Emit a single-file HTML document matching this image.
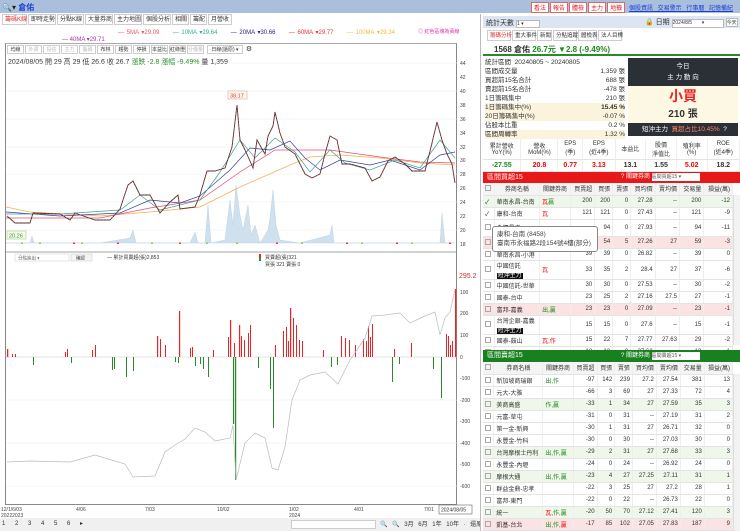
<!DOCTYPE html>
<html><head><meta charset="utf-8">
<style>
*{margin:0;padding:0;box-sizing:border-box}
body{width:740px;height:531px;overflow:hidden;background:#fff;font-family:"Liberation Sans","Noto Sans CJK TC",sans-serif;font-size:7px;color:#333;position:relative}
.a{position:absolute}
.tab{display:inline-block;border:1px solid #ccc;padding:0 2px;margin-right:1px;font-size:6px;background:#fff;height:11px;line-height:10px}
.tt{display:inline-block;border:1px solid #ccc;width:17px;height:9px;line-height:8px;font-size:5px;text-align:center;margin-right:1px;background:#fff}
table{border-collapse:collapse;width:100%}
td{border-bottom:1px solid #e4e4e4;border-right:1px solid #eee;padding:0 2px;height:12px;font-size:6px;text-align:right;white-space:nowrap}
td.l{text-align:left}
.b{font-weight:bold}
.r{color:#e00}.g{color:#1a8a1a}
.cb{display:inline-block;width:6px;height:6px;border:1px solid #aaa;vertical-align:middle}
.blk{background:#111;color:#fff;padding:0 1px}
.pk{background:#fbe3e3}.lg{background:#eef7ea}
</style></head><body>
<div class="a" style="left:0;top:0;width:740px;height:13px;background:#a9bfdc"></div>
<div class="a" style="left:2px;top:2px;font-size:8px;color:#222">🔍▾ <span style="color:#1a3fcf;font-weight:bold">倉佑</span></div>
<div class="a" style="left:531px;top:2px">
<span style="display:inline-block;background:#fff;border:1px solid #d66;color:#d22;padding:0 2px;font-size:6px;margin-right:1px">看法</span><span style="display:inline-block;background:#fff;border:1px solid #d66;color:#d22;padding:0 2px;font-size:6px;margin-right:1px">報告</span><span style="display:inline-block;background:#fff;border:1px solid #d66;color:#d22;padding:0 2px;font-size:6px;margin-right:1px">體檢</span><span style="display:inline-block;background:#fff;border:1px solid #d66;color:#d22;padding:0 2px;font-size:6px;margin-right:1px">主力</span><span style="display:inline-block;background:#fff;border:1px solid #d66;color:#d22;padding:0 2px;font-size:6px">地籤</span></div>
<div class="a" style="left:629px;top:3px;color:#1a3fcf;font-size:6px;text-decoration:underline;word-spacing:3px">個股資訊 交易警示 行事曆 記憶備紀</div>
<div class="a" style="left:2px;top:14px;white-space:nowrap"><span class="tab" style="color:#d33;width:25px">籌碼K線</span><span class="tab" style="width:28px">即時走勢</span><span class="tab" style="width:27px">分點K線</span><span class="tab" style="width:28px">大量券商</span><span class="tab" style="width:28px">主力地圖</span><span class="tab" style="width:28px">個股分析</span><span class="tab" style="width:17px">相關</span><span class="tab" style="width:17px">籌配</span><span class="tab" style="width:24px">月營收</span></div>
<div class="a" style="left:118px;top:29px;font-size:6px;word-spacing:1px;white-space:nowrap"><span style="color:#e55">— 5MA ▾29.09</span> &nbsp;&nbsp;&nbsp; <span style="color:#3a9">— 10MA ▾29.64</span> &nbsp;&nbsp;&nbsp; <span style="color:#228">— 20MA ▾30.66</span> &nbsp;&nbsp;&nbsp; <span style="color:#e33">— 60MA ▾29.77</span> &nbsp;&nbsp;&nbsp; <span style="color:#eb4">— 100MA ▾29.34</span></div>
<div class="a" style="left:418px;top:28px;font-size:5px;color:#d3a">◎ 紅色區塊為黃線</div>
<div class="a" style="left:62px;top:36px;font-size:6px;color:#a3a">— 40MA ▾29.71</div>
<div class="a" style="left:5px;top:43px;width:452px;height:462px;border:1px solid #888;border-top:1px solid #aaa"></div>
<div class="a" style="left:7px;top:45px;white-space:nowrap"><span class="tt">均線</span><span class="tt" style="color:#bbb">外資</span><span class="tt" style="color:#bbb">投信</span><span class="tt" style="color:#bbb">主力</span><span class="tt" style="color:#bbb">籌碼</span><span class="tt">布林</span><span class="tt">趨勢</span><span class="tt">停損</span><span class="tt">本益比</span><span class="tt">紅綠燈</span><span class="tt" style="color:#bbb">分價量</span> <span class="tt" style="width:36px">日線(還原) ▾</span> <span style="font-size:7px">⚙</span></div>
<div class="a" style="left:8px;top:57px;font-size:7px;white-space:nowrap">2024/08/05 開 29 高 29 低 26.6 收 26.7 <span class="g">漲跌 -2.8 漲幅 -9.49%</span> 量 1,359</div>
<svg class="a" style="left:0;top:0" width="480" height="531">
<g stroke="#eee" stroke-width="0.6">
<line x1="6" y1="63" x2="457" y2="63"/><line x1="6" y1="91" x2="457" y2="91"/><line x1="6" y1="119" x2="457" y2="119"/><line x1="6" y1="147" x2="457" y2="147"/><line x1="6" y1="174" x2="457" y2="174"/><line x1="6" y1="202" x2="457" y2="202"/><line x1="6" y1="230" x2="457" y2="230"/>
<line x1="6" y1="400" x2="457" y2="400"/><line x1="6" y1="443" x2="457" y2="443"/><line x1="6" y1="486" x2="457" y2="486"/></g>
<g font-size="5" fill="#444" font-family="Liberation Sans">
<text x="460" y="65">44</text><text x="460" y="79">42</text><text x="460" y="93">40</text><text x="460" y="107">38</text><text x="460" y="121">36</text><text x="460" y="135">34</text><text x="460" y="149">32</text><text x="460" y="162">30</text><text x="460" y="176">28</text><text x="460" y="190">26</text><text x="460" y="204">24</text><text x="460" y="218">22</text><text x="460" y="232">20</text><text x="460" y="246">18</text>
<text x="460" y="294">100</text><text x="460" y="315">200</text><text x="460" y="337">100</text><text x="460" y="359">0</text><text x="460" y="380">-100</text><text x="460" y="402">-200</text><text x="460" y="423">-300</text><text x="460" y="445">-400</text><text x="460" y="466">-500</text><text x="460" y="488">-600</text>
<text x="1" y="511">12/1/6/03</text><text x="1" y="517">20222023</text><text x="76" y="511">4/06</text><text x="145" y="511">7/03</text><text x="217" y="511">10/02</text><text x="289" y="511">1/02</text><text x="289" y="517">2024</text><text x="354" y="511">4/01</text><text x="424" y="511">7/01</text></g>
<rect x="439" y="505" width="33" height="9" fill="#fff" stroke="#666" stroke-width="0.6"/><text x="441" y="511.5" font-size="5" fill="#333">2024/08/05</text>
<text x="459" y="278" font-size="7" fill="#c33">295.2</text>
<path d="M6 243 L30 243 L32 236 L34 243 L100 243 L130 238 L133 230 L136 243 L190 243 L195 232 L198 243 L205 243 L208 205 L211 243 L225 240 L230 200 L233 225 L236 185 L240 215 L243 230 L248 205 L251 235 L255 225 L260 243 L268 230 L270 218 L273 190 L276 225 L280 240 L300 243 L330 235 L332 225 L334 243 L440 243 L442 213 L445 243 L455 243Z" fill="#cfe0ee" stroke="#b6cde0" stroke-width="0.4"/>
<g fill="#8c3" font-size="4"><text x="20" y="244">▲</text><text x="38" y="244">▲</text><text x="80" y="244">▲</text><text x="150" y="244">▲</text><text x="205" y="244">▲</text><text x="235" y="244">▲</text><text x="300" y="244">▲</text><text x="360" y="244">▲</text><text x="410" y="244">▲</text></g>
<g fill="#d33" font-size="4"><text x="72" y="244">▲</text><text x="116" y="244">▲</text><text x="178" y="244">▲</text><text x="275" y="244">▲</text><text x="345" y="244">▲</text><text x="395" y="244">▲</text><text x="448" y="244">▲</text></g>
<polyline fill="none" stroke="#f0b050" stroke-width="0.7" points="6,207 30,212 100,216 150,212 200,207 240,187 290,165 310,157 340,155 380,158 420,163 455,165"/>
<polyline fill="none" stroke="#e05070" stroke-width="0.7" points="6,218 100,218 150,208 200,200 240,172 275,150 300,150 330,150 380,157 420,162 455,163"/>
<polyline fill="none" stroke="#3340a0" stroke-width="0.7" points="6,212 60,216 120,213 150,200 180,203 200,196 230,170 250,148 270,150 290,141 305,158 320,170 340,160 370,165 390,160 420,170 440,155 455,152"/>
<polyline fill="none" stroke="#40a090" stroke-width="0.7" points="6,214 60,214 120,210 140,195 160,210 200,200 220,172 240,140 255,158 275,138 295,152 310,172 330,150 345,163 370,170 395,160 420,168 440,140 455,158"/>
<polyline fill="none" stroke="#333" stroke-width="0.9" points="7,216 15,223 30,223 33,213 60,214 70,220 75,213 95,220 110,220 120,209 128,185 133,181 140,195 150,195 160,213 170,202 178,195 180,209 195,207 200,195 207,171 215,171 225,168 232,147 237,105 240,140 245,150 250,161 253,168 257,140 265,154 268,136 273,126 275,112 280,133 285,147 295,154 305,174 312,178 320,174 325,154 330,136 337,140 342,164 350,164 365,168 372,181 380,177 388,161 395,157 405,164 412,171 425,171 432,143 437,122 442,140 447,154 452,164 455,183"/>
<polyline fill="none" stroke="#e33" stroke-width="0.6" stroke-dasharray="1.5 2" points="7,216 15,223 30,223 33,213 60,214 70,220 75,213 95,220 110,220 120,209 128,185 133,181 140,195 150,195 160,213 170,202 178,195 180,209 195,207 200,195 207,171 215,171 225,168 232,147 237,105 240,140 245,150 250,161 253,168 257,140 265,154 268,136 273,126 275,112 280,133 285,147 295,154 305,174 312,178 320,174 325,154 330,136 337,140 342,164 350,164 365,168 372,181 380,177 388,161 395,157 405,164 412,171 425,171 432,143 437,122 442,140 447,154 452,164 455,183"/>
<rect x="228" y="91" width="19" height="8" fill="#fff8e8" stroke="#dcc"/><text x="230" y="97.5" font-size="5.5" fill="#e33">38.17</text>
<rect x="7" y="231" width="19" height="8" fill="#f3fbe8" stroke="#cdb"/><text x="9" y="237.5" font-size="5.5" fill="#393">20.26</text>
<line x1="6" y1="252" x2="457" y2="252" stroke="#888" stroke-width="0.8"/>
<line x1="6" y1="357" x2="457" y2="357" stroke="#ccc" stroke-width="0.5"/>
<g fill="#e22">
<rect x="7" y="349" width="1.3" height="8"/><rect x="12" y="354" width="1" height="3"/><rect x="15" y="354" width="1" height="3"/><rect x="65" y="352" width="1" height="5"/><rect x="67" y="349" width="1" height="8"/><rect x="92" y="350" width="1" height="7"/><rect x="95" y="345" width="1" height="12"/><rect x="157" y="336" width="1.2" height="21"/><rect x="160" y="339" width="1" height="18"/><rect x="165" y="345" width="1" height="12"/><rect x="179" y="311" width="1.2" height="46"/><rect x="190" y="348" width="1" height="9"/><rect x="192" y="347" width="1" height="10"/><rect x="213" y="350" width="1" height="7"/><rect x="228" y="337" width="1" height="20"/><rect x="230" y="320" width="1.2" height="37"/><rect x="234" y="343" width="1" height="14"/><rect x="239" y="325" width="1.2" height="32"/><rect x="241" y="336" width="1" height="21"/><rect x="244" y="340" width="1" height="17"/><rect x="248" y="333" width="1" height="24"/><rect x="250" y="325" width="1" height="32"/><rect x="275" y="345" width="1" height="12"/><rect x="283" y="331" width="1" height="26"/><rect x="286" y="327" width="1" height="30"/><rect x="288" y="341" width="1" height="16"/><rect x="290" y="308" width="1.2" height="49"/><rect x="293" y="318" width="1" height="39"/><rect x="296" y="325" width="1" height="32"/><rect x="299" y="340" width="1" height="17"/><rect x="302" y="341" width="1" height="16"/><rect x="323" y="350" width="1" height="7"/><rect x="341" y="336" width="1" height="21"/><rect x="345" y="338" width="1" height="19"/><rect x="349" y="340" width="1" height="17"/><rect x="355" y="345" width="1" height="12"/><rect x="363" y="339" width="1" height="18"/><rect x="366" y="341" width="1" height="16"/><rect x="368" y="326" width="1" height="31"/><rect x="370" y="337" width="1" height="20"/><rect x="372" y="324" width="1" height="33"/><rect x="394" y="349" width="1" height="8"/><rect x="411" y="343" width="1" height="14"/><rect x="446" y="334" width="1" height="23"/><rect x="448" y="336" width="1" height="21"/><rect x="450" y="345" width="1" height="12"/><rect x="452" y="341" width="1" height="16"/><rect x="455" y="289" width="1.3" height="68"/></g>
<g fill="#2a8a2a">
<rect x="33" y="357" width="1" height="8"/><rect x="71" y="357" width="1" height="6"/><rect x="112" y="357" width="1" height="13"/><rect x="114" y="357" width="1" height="12"/><rect x="126" y="357" width="1" height="20"/><rect x="133" y="357" width="1" height="14"/><rect x="175" y="357" width="1" height="5"/><rect x="178" y="357" width="1" height="6"/><rect x="195" y="357" width="1" height="9"/><rect x="200" y="357" width="1" height="7"/><rect x="203" y="357" width="1" height="12"/><rect x="208" y="357" width="1" height="20"/><rect x="233" y="357" width="1.2" height="67"/><rect x="235" y="357" width="1.2" height="123"/><rect x="258" y="357" width="1" height="11"/><rect x="270" y="357" width="1" height="32"/><rect x="273" y="357" width="1" height="71"/><rect x="331" y="357" width="1" height="10"/><rect x="337" y="357" width="1" height="8"/><rect x="392" y="357" width="1" height="25"/><rect x="399" y="357" width="1" height="7"/><rect x="433" y="357" width="1" height="12"/><rect x="441" y="357" width="1" height="41"/></g>
<polyline fill="none" stroke="#bbb" stroke-width="0.7" points="7,462 30,461 70,462 95,455 125,464 133,477 155,476 165,452 175,445 185,439 195,428 205,432 215,441 230,438 233,425 236,480 245,443 255,433 265,438 272,468 278,470 285,447 292,400 300,380 310,375 325,372 338,384 350,360 365,338 372,316 385,315 400,313 410,323 425,316 435,312 440,335 445,318 450,312 455,290"/>
<rect x="15" y="254" width="54" height="7" fill="#fff" stroke="#ccc" stroke-width="0.5"/><text x="18" y="259.5" font-size="4.5" fill="#666">分點進出 ▾</text>
<rect x="71" y="254" width="21" height="7" fill="#f4f4f4" stroke="#ccc" stroke-width="0.5"/><text x="76" y="259.5" font-size="4.5" fill="#333">確認</text>
<text x="107" y="259" font-size="5" fill="#333">— 累計買賣超(張)2,853</text>
<rect x="259" y="254" width="2" height="4" fill="#e22"/><rect x="259" y="258" width="2" height="3" fill="#292"/>
<text x="265" y="259" font-size="5" fill="#333">買賣超(張)321</text><text x="265" y="266" font-size="5" fill="#333">買張 321 賣張 0</text>
</svg>
<div class="a" style="left:0;top:518px;width:480px;height:13px;background:#f0f0f0"></div>
<div class="a" style="left:2px;top:520px;font-size:6px;letter-spacing:4px">1 2 3 4 5 6 ▸</div>
<div class="a" style="left:291px;top:520px;width:85px;height:9px;background:#fff;border:1px solid #ccc"></div>
<div class="a" style="left:380px;top:519px;font-size:6px;word-spacing:3px;white-space:nowrap">🔍 🔍 3月 6月 1年 10年 · 還原</div>
<!-- right panel -->
<div class="a" style="left:480px;top:14px;width:260px;height:517px;background:#fff;border-left:1px solid #bbb"></div>
<div class="a" style="left:483px;top:16px;width:257px;height:12px;background:#dce6f2"></div>
<div class="a" style="left:486px;top:18px;font-size:7px">統計天數 <span style="display:inline-block;background:#fff;border:1px solid #bbb;width:24px;height:8px;font-size:5px">1 ▾</span></div>
<div class="a" style="left:645px;top:17px;font-size:7px;white-space:nowrap">🔒 日期 <span style="display:inline-block;background:#fff;border:1px solid #bbb;width:52px;height:9px;font-size:5px">2024/8/5 &nbsp;&nbsp;&nbsp;&nbsp;&nbsp; ▾</span> <span style="display:inline-block;border:1px solid #bbb;background:#fff;font-size:5px">今天</span></div>
<div class="a" style="left:487px;top:30px;white-space:nowrap"><span class="tab" style="color:#d33;font-size:5.5px;width:24px">籌碼分析</span><span class="tab" style="font-size:5.5px;width:24px">重大事件</span><span class="tab" style="font-size:5.5px;width:15px">新聞</span><span class="tab" style="font-size:5.5px;width:24px">分點追蹤</span><span class="tab" style="font-size:5.5px;width:19px">體檢表</span><span class="tab" style="font-size:5.5px;width:24px">法人目標</span></div>
<div class="a" style="left:483px;top:43px;width:257px;height:13px;border-bottom:2px solid #2a8a2a"></div>
<div class="a" style="left:494px;top:44px;font-size:8px;font-weight:bold;white-space:nowrap">1568 倉佑 <span class="g">26.7元 ▼2.8 (-9.49%)</span></div>
<div class="a" style="left:485px;top:58px;width:140px;font-size:6.5px;line-height:9px;white-space:nowrap">
<div>統計區間 &nbsp;20240805 ~ 20240805</div>
<div>區間成交量<span style="float:right">1,359 張</span></div>
<div>買超前15名合計<span style="float:right">688 張</span></div>
<div>賣超前15名合計<span style="float:right">-478 張</span></div>
<div>1日籌碼集中<span style="float:right">210 張</span></div>
<div style="background:#fbf3dc">1日籌碼集中(%)<span style="float:right;font-weight:bold">15.45 %</span></div>
<div style="background:#fbf3dc">20日籌碼集中(%)<span style="float:right">-0.07 %</span></div>
<div>佔股本比重<span style="float:right">0.2 %</span></div>
<div style="background:#fbf3dc">區間周轉率<span style="float:right">1.32 %</span></div></div>
<div class="a" style="left:628px;top:58px;width:110px;height:28px;background:#2b2f36;color:#fff;text-align:center;font-size:6.5px;line-height:11px;padding-top:3px">今日<br>主 力 動 向</div>
<div class="a" style="left:628px;top:86px;width:110px;height:37px;background:#fdf8e4;text-align:center"><div style="color:#e22;font-size:14px;font-weight:bold;line-height:17px;margin-top:2px">小買</div><div style="font-size:10px;font-weight:bold">210 張</div></div>
<div class="a" style="left:628px;top:123px;width:110px;height:13px;background:#2b2f36;color:#fff;font-size:6.5px;line-height:13px;padding-left:14px;white-space:nowrap">短沖主力 &nbsp;<span style="color:#f86">買超占比10.45%</span> &nbsp;?</div>
<div class="a" style="left:483px;top:139px;width:257px">
<table style="text-align:center"><tr style="height:20px"><td style="text-align:center">累計營收<br>YoY(%)</td><td style="text-align:center">營收<br>MoM(%)</td><td style="text-align:center">EPS<br>(季)</td><td style="text-align:center">EPS<br>(近4季)</td><td style="text-align:center">本益比</td><td style="text-align:center">股價<br>淨值比</td><td style="text-align:center">殖利率<br>(%)</td><td style="text-align:center">ROE<br>(近4季)</td></tr>
<tr><td class="b g" style="text-align:center;font-size:7px">-27.55</td><td class="b r" style="text-align:center;font-size:7px">20.8</td><td class="b r" style="text-align:center;font-size:7px">0.77</td><td class="b r" style="text-align:center;font-size:7px">3.13</td><td class="b" style="text-align:center;font-size:7px">13.1</td><td class="b" style="text-align:center;font-size:7px">1.55</td><td class="b r" style="text-align:center;font-size:7px">5.02</td><td class="b" style="text-align:center;font-size:7px">18.2</td></tr></table></div>
<div class="a" style="left:483px;top:172px;width:257px;height:11px;background:#e81818;color:#fff;font-size:7px;line-height:11px;padding-left:4px;white-space:nowrap">區間買超15<span style="position:absolute;left:138px;font-size:6px">? 關鍵券商 <span style="display:inline-block;background:#fff;color:#555;width:48px;height:8px;line-height:8px;font-size:5px">區間買超15 ▾</span></span></div>
<div class="a" style="left:483px;top:183px;width:250px">
<table>
<tr style="background:#f4f4f4"><td class="l"><span class="cb"></span></td><td style="text-align:center">券商名稱</td><td style="text-align:center">關鍵券商</td><td>買賣超</td><td>買張</td><td>賣張</td><td>買均價</td><td>賣均價</td><td>交易量</td><td>損益(萬)</td></tr>
<tr class="lg"><td class="l">✓</td><td class="l">華南永昌-台南</td><td class="l r">瓦<span class="g">贏</span></td><td>200</td><td>200</td><td>0</td><td>27.28</td><td>--</td><td>200</td><td>-12</td></tr>
<tr><td class="l">✓</td><td class="l">康和-台南</td><td class="l r">瓦</td><td>121</td><td>121</td><td>0</td><td>27.43</td><td>--</td><td>121</td><td>-9</td></tr>
<tr style="height:17px"><td class="l"><span class="cb"></span></td><td class="l">會標昌孝</td><td></td><td></td><td>94</td><td>0</td><td>27.93</td><td>--</td><td>94</td><td>-11</td></tr>
<tr class="pk"><td class="l"><span class="cb"></span></td><td class="l"></td><td></td><td></td><td>54</td><td>5</td><td>27.26</td><td>27</td><td>59</td><td>-3</td></tr>
<tr><td class="l"><span class="cb"></span></td><td class="l">華南永昌-小港</td><td></td><td>39</td><td>39</td><td>0</td><td>26.82</td><td>--</td><td>39</td><td>0</td></tr>
<tr style="height:19px"><td class="l"><span class="cb"></span></td><td class="l">中國信託<br><span class="blk">短沖主力</span></td><td class="l r">瓦</td><td>33</td><td>35</td><td>2</td><td>28.4</td><td>27</td><td>37</td><td>-6</td></tr>
<tr><td class="l"><span class="cb"></span></td><td class="l">中國信託-世華</td><td></td><td>30</td><td>30</td><td>0</td><td>27.53</td><td>--</td><td>30</td><td>-2</td></tr>
<tr><td class="l"><span class="cb"></span></td><td class="l">國泰-台中</td><td></td><td>23</td><td>25</td><td>2</td><td>27.16</td><td>27.5</td><td>27</td><td>-1</td></tr>
<tr class="pk"><td class="l"><span class="cb"></span></td><td class="l">富邦-嘉義</td><td class="l g">出,贏</td><td>23</td><td>23</td><td>0</td><td>27.09</td><td>--</td><td>23</td><td>-1</td></tr>
<tr style="height:19px"><td class="l"><span class="cb"></span></td><td class="l">台灣企銀-嘉義<br><span class="blk">短沖主力</span></td><td></td><td>15</td><td>15</td><td>0</td><td>27.6</td><td>--</td><td>15</td><td>-1</td></tr>
<tr><td class="l"><span class="cb"></span></td><td class="l">國泰-鼓山</td><td class="l r">瓦,作</td><td>15</td><td>22</td><td>7</td><td>27.77</td><td>27.63</td><td>29</td><td>-2</td></tr>
<tr><td class="l"><span class="cb"></span></td><td class="l">元大-金門</td><td></td><td>13</td><td>13</td><td>0</td><td>27.62</td><td>--</td><td>13</td><td>-1</td></tr>
</table></div>
<div class="a" style="left:492px;top:226px;width:106px;height:26px;background:#fff;border:1px solid #888;border-radius:3px;font-size:6.5px;line-height:9px;padding:3px 4px;color:#444;white-space:nowrap">康和-台南 (8458)<br>臺南市永福路2段154號4樓(部分)</div>
<div class="a" style="left:483px;top:350px;width:257px;height:12px;background:#18801e;color:#fff;font-size:7px;line-height:12px;padding-left:4px;white-space:nowrap">區間賣超15<span style="position:absolute;left:138px;font-size:6px">? 關鍵券商 <span style="display:inline-block;background:#fff;color:#555;width:48px;height:8px;line-height:8px;font-size:5px">區間賣超15 ▾</span></span></div>
<div class="a" style="left:483px;top:362px;width:250px">
<table>
<tr style="background:#f4f4f4"><td class="l"><span class="cb"></span></td><td style="text-align:center">券商名稱</td><td style="text-align:center">關鍵券商</td><td>買賣超</td><td>買張</td><td>賣張</td><td>買均價</td><td>賣均價</td><td>交易量</td><td>損益(萬)</td></tr>
<tr><td class="l"><span class="cb"></span></td><td class="l">新加坡商瑞銀</td><td class="l g">出,作</td><td>-97</td><td>142</td><td>239</td><td>27.2</td><td>27.54</td><td>381</td><td>13</td></tr>
<tr><td class="l"><span class="cb"></span></td><td class="l">元大-大雅</td><td></td><td>-66</td><td>3</td><td>69</td><td>27</td><td>27.33</td><td>72</td><td>4</td></tr>
<tr class="lg"><td class="l"><span class="cb"></span></td><td class="l">美商高盛</td><td class="l g">作,贏</td><td>-33</td><td>1</td><td>34</td><td>27</td><td>27.59</td><td>35</td><td>3</td></tr>
<tr><td class="l"><span class="cb"></span></td><td class="l">元富-草屯</td><td></td><td>-31</td><td>0</td><td>31</td><td>--</td><td>27.19</td><td>31</td><td>2</td></tr>
<tr><td class="l"><span class="cb"></span></td><td class="l">第一金-新興</td><td></td><td>-30</td><td>1</td><td>31</td><td>27</td><td>26.71</td><td>32</td><td>0</td></tr>
<tr><td class="l"><span class="cb"></span></td><td class="l">永豐金-竹科</td><td></td><td>-30</td><td>0</td><td>30</td><td>--</td><td>27.03</td><td>30</td><td>0</td></tr>
<tr class="lg"><td class="l"><span class="cb"></span></td><td class="l">台灣摩根士丹利</td><td class="l g">出,作,贏</td><td>-29</td><td>2</td><td>31</td><td>27</td><td>27.68</td><td>33</td><td>3</td></tr>
<tr><td class="l"><span class="cb"></span></td><td class="l">永豐金-內壢</td><td></td><td>-24</td><td>0</td><td>24</td><td>--</td><td>26.92</td><td>24</td><td>0</td></tr>
<tr class="lg"><td class="l"><span class="cb"></span></td><td class="l">摩根大通</td><td class="l g">出,作,贏</td><td>-23</td><td>4</td><td>27</td><td>27.25</td><td>27.11</td><td>31</td><td>1</td></tr>
<tr><td class="l"><span class="cb"></span></td><td class="l">群益金鼎-忠孝</td><td></td><td>-22</td><td>3</td><td>25</td><td>27</td><td>27.2</td><td>28</td><td>1</td></tr>
<tr><td class="l"><span class="cb"></span></td><td class="l">富邦-東門</td><td></td><td>-22</td><td>0</td><td>22</td><td>--</td><td>26.73</td><td>22</td><td>0</td></tr>
<tr class="lg"><td class="l"><span class="cb"></span></td><td class="l">統一</td><td class="l r">瓦,<span class="g">作,贏</span></td><td>-20</td><td>50</td><td>70</td><td>27.12</td><td>27.41</td><td>120</td><td>3</td></tr>
<tr class="pk"><td class="l"><span class="cb"></span></td><td class="l">凱基-台北</td><td class="l g">出,作,<span class="r">贏</span></td><td>-17</td><td>85</td><td>102</td><td>27.05</td><td>27.83</td><td>187</td><td>9</td></tr>
</table></div>
<div class="a" style="left:733px;top:195px;width:7px;height:150px;background:#f2f2f2;border-left:1px solid #ddd"></div>
<div class="a" style="left:733px;top:374px;width:7px;height:157px;background:#f2f2f2;border-left:1px solid #ddd"></div>
</body></html>
